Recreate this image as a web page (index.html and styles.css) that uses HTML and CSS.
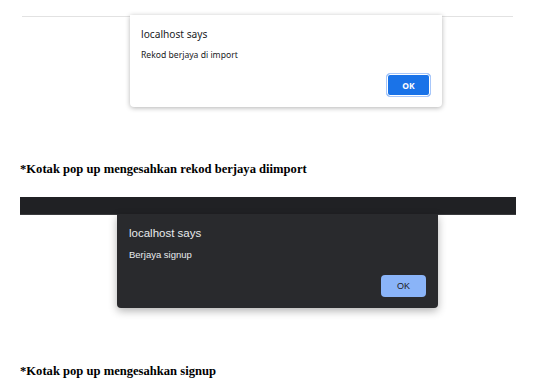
FILE: index.html
```html
<!DOCTYPE html>
<html lang="ms">
<head>
    <meta charset="UTF-8">
    <meta name="viewport" content="width=device-width, initial-scale=1.0">
    <title>Kotak pop up</title>
    <link rel="stylesheet" href="styles.css">
</head>
<body>

<div class="page">
    <div class="screen-light">
        <div class="dialog dialog-light">
            <div class="dialog-title">localhost says</div>
            <div class="dialog-text">Rekod berjaya di import</div>
            <div class="dialog-actions">
                <button class="ok-button">OK</button>
            </div>
        </div>
    </div>

    <p class="caption caption-first">*Kotak pop up mengesahkan rekod berjaya diimport</p>

    <div class="screen-dark">
        <div class="top-bar"></div>
        <div class="dialog dialog-dark">
            <div class="dialog-title">localhost says</div>
            <div class="dialog-text">Berjaya signup</div>
            <div class="dialog-actions">
                <button class="ok-button">OK</button>
            </div>
        </div>
    </div>

    <p class="caption caption-second">*Kotak pop up mengesahkan signup</p>
</div>

</body>
</html>
```

FILE: styles.css
```css
body {
    margin: 0;
    background-color: #ffffff;
}
.page {
    padding-left: 20px;
}
.screen-light {
    margin: 16px 0 0 2px;
    width: 491px;
    border-top: 1px solid #e2e2e2;
}
.dialog {
    display: flex;
    flex-direction: column;
    box-sizing: border-box;
}
.dialog-light {
    width: 312px;
    height: 92px;
    margin: -2px 0 0 108px;
    padding: 12px 11px 10px 11px;
    background-color: #ffffff;
    border-radius: 0 0 4px 4px;
    box-shadow: 0 1px 5px rgba(0, 0, 0, 0.3);
    font-family: "Noto Sans", sans-serif;
    color: #202124;
}
.dialog-light .dialog-title {
    font-size: 10.2px;
    line-height: 14px;
}
.dialog-light .dialog-text {
    margin-top: 8px;
    font-size: 8.6px;
    line-height: 12px;
}
.dialog-actions {
    margin-top: auto;
    display: flex;
    justify-content: flex-end;
}
.ok-button {
    font-family: "Noto Sans", sans-serif;
    font-weight: bold;
    cursor: pointer;
}
.dialog-light .ok-button {
    width: 45px;
    height: 24px;
    border: 1px solid #a8c7fa;
    border-radius: 4px;
    background-color: #1a73e8;
    box-shadow: inset 0 0 0 1px #ffffff;
    color: #ffffff;
    font-size: 8.5px;
}
.caption {
    margin: 0;
    font-family: "Liberation Serif", serif;
    font-weight: bold;
    font-size: 12.6px;
    line-height: 15px;
    color: #000000;
}
.caption-first {
    margin-top: 55px;
}
.screen-dark {
    margin-top: 20px;
    width: 496px;
}
.top-bar {
    height: 17px;
    background-color: #202124;
    border-bottom: 1px solid #3a3b3e;
}
.dialog-dark {
    width: 321px;
    height: 94px;
    margin: -1px 0 0 97px;
    padding: 12px 12px 11px 12px;
    background-color: #292a2d;
    border-radius: 0 0 4px 4px;
    box-shadow: 0 3px 8px rgba(0, 0, 0, 0.3);
    font-family: "Liberation Sans", sans-serif;
    color: #e8eaed;
}
.dialog-dark .dialog-title {
    font-size: 11.5px;
    line-height: 15px;
}
.dialog-dark .dialog-text {
    margin-top: 7px;
    font-size: 9.5px;
    line-height: 13px;
}
.dialog-dark .ok-button {
    width: 45px;
    height: 22px;
    border: none;
    border-radius: 4px;
    background-color: #8ab4f8;
    color: #202124;
    font-family: "Liberation Sans", sans-serif;
    font-weight: normal;
    font-size: 9px;
}
.caption-second {
    margin-top: 56px;
}
```
